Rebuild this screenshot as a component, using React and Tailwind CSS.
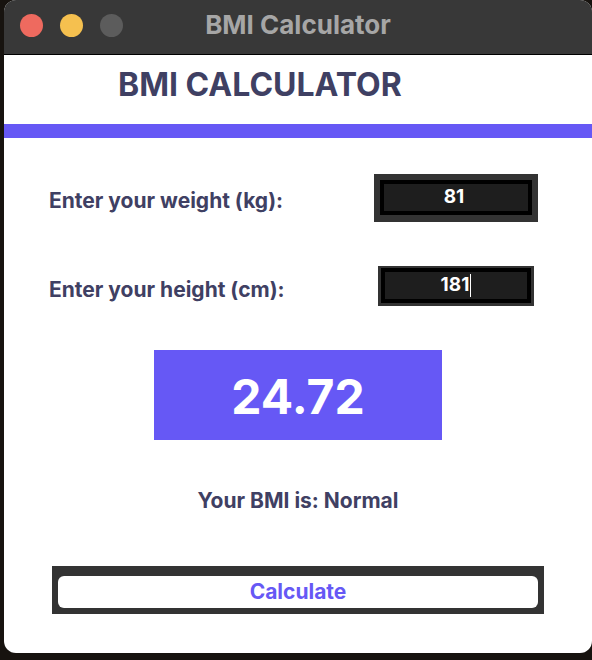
const purple = 'bg-[#6658f5]';

const TrafficLights = () => (
  <div className="absolute left-[16px] top-[14px] flex gap-[17px]">
    <span className="block h-[23px] w-[23px] rounded-full bg-[#ee6a5f]" />
    <span className="block h-[23px] w-[23px] rounded-full bg-[#f5c04f]" />
    <span className="block h-[23px] w-[23px] rounded-full bg-[#5c5c5c]" />
  </div>
);

export default function App() {
  return (
    <div
      className="h-[660px] w-[592px] overflow-hidden bg-[#17130f] pl-[4px]"
      style={{ fontFamily: 'Inter, "Noto Sans", sans-serif' }}
    >
      <div className="flex h-[653px] w-[588px] flex-col overflow-hidden rounded-[12px] bg-white">
        {/* title bar */}
        <div className="relative flex h-[55px] shrink-0 items-center justify-center border-b border-black bg-[#383838]">
          <TrafficLights />
          <span className="pb-[5px] text-[26px] font-bold text-[#a6a6a6]">BMI Calculator</span>
        </div>

        <h1 className="pl-[114px] pt-[10px] text-[32px] leading-[40px] font-bold text-[#3f4063]">
          BMI CALCULATOR
        </h1>
        <div className={`mt-[19px] h-[14px] ${purple}`} />

        {/* weight */}
        <div className="mt-[36px] flex items-center justify-between pl-[45px] pr-[54px]">
          <span className="mt-[6px] text-[21px] font-bold text-[#3f4063]">Enter your weight (kg):</span>
          <div className="h-[48px] w-[164px] bg-[#333333] px-[6px] pt-[6px] pb-[7px]">
            <div className="flex h-full items-center justify-center border-4 border-black bg-[#1e1e1e] pr-[4px] text-[19px] font-bold text-white">
              81
            </div>
          </div>
        </div>

        {/* height */}
        <div className="mt-[44px] flex items-center justify-between pl-[45px] pr-[58px]">
          <span className="mt-[7px] text-[21px] font-bold text-[#3f4063]">Enter your height (cm):</span>
          <div className="h-[40px] w-[156px] bg-[#333333] px-[3px] pt-[2px] pb-[3px]">
            <div className="flex h-full items-center justify-center border-4 border-black bg-[#1e1e1e] text-[19px] font-bold text-white">
              181
              <span className="ml-[1px] inline-block h-[23px] w-px bg-white" />
            </div>
          </div>
        </div>

        {/* result */}
        <div className={`mx-auto mt-[44px] flex h-[90px] w-[288px] items-center justify-center ${purple}`}>
          <span className="pt-[3px] text-[48px] font-bold text-white">24.72</span>
        </div>

        <p className="mt-[49px] text-center text-[21px] leading-[24px] font-bold text-[#3f4063]">
          Your BMI is: Normal
        </p>

        <div className="mx-[48px] mt-[53px] bg-[#333333] px-[6px] pt-[10px] pb-[6px]">
          <button className="flex h-[32px] w-full items-center justify-center rounded-[6px] bg-white text-[21px] font-bold text-[#6658f5]">
            Calculate
          </button>
        </div>
      </div>
    </div>
  );
}
